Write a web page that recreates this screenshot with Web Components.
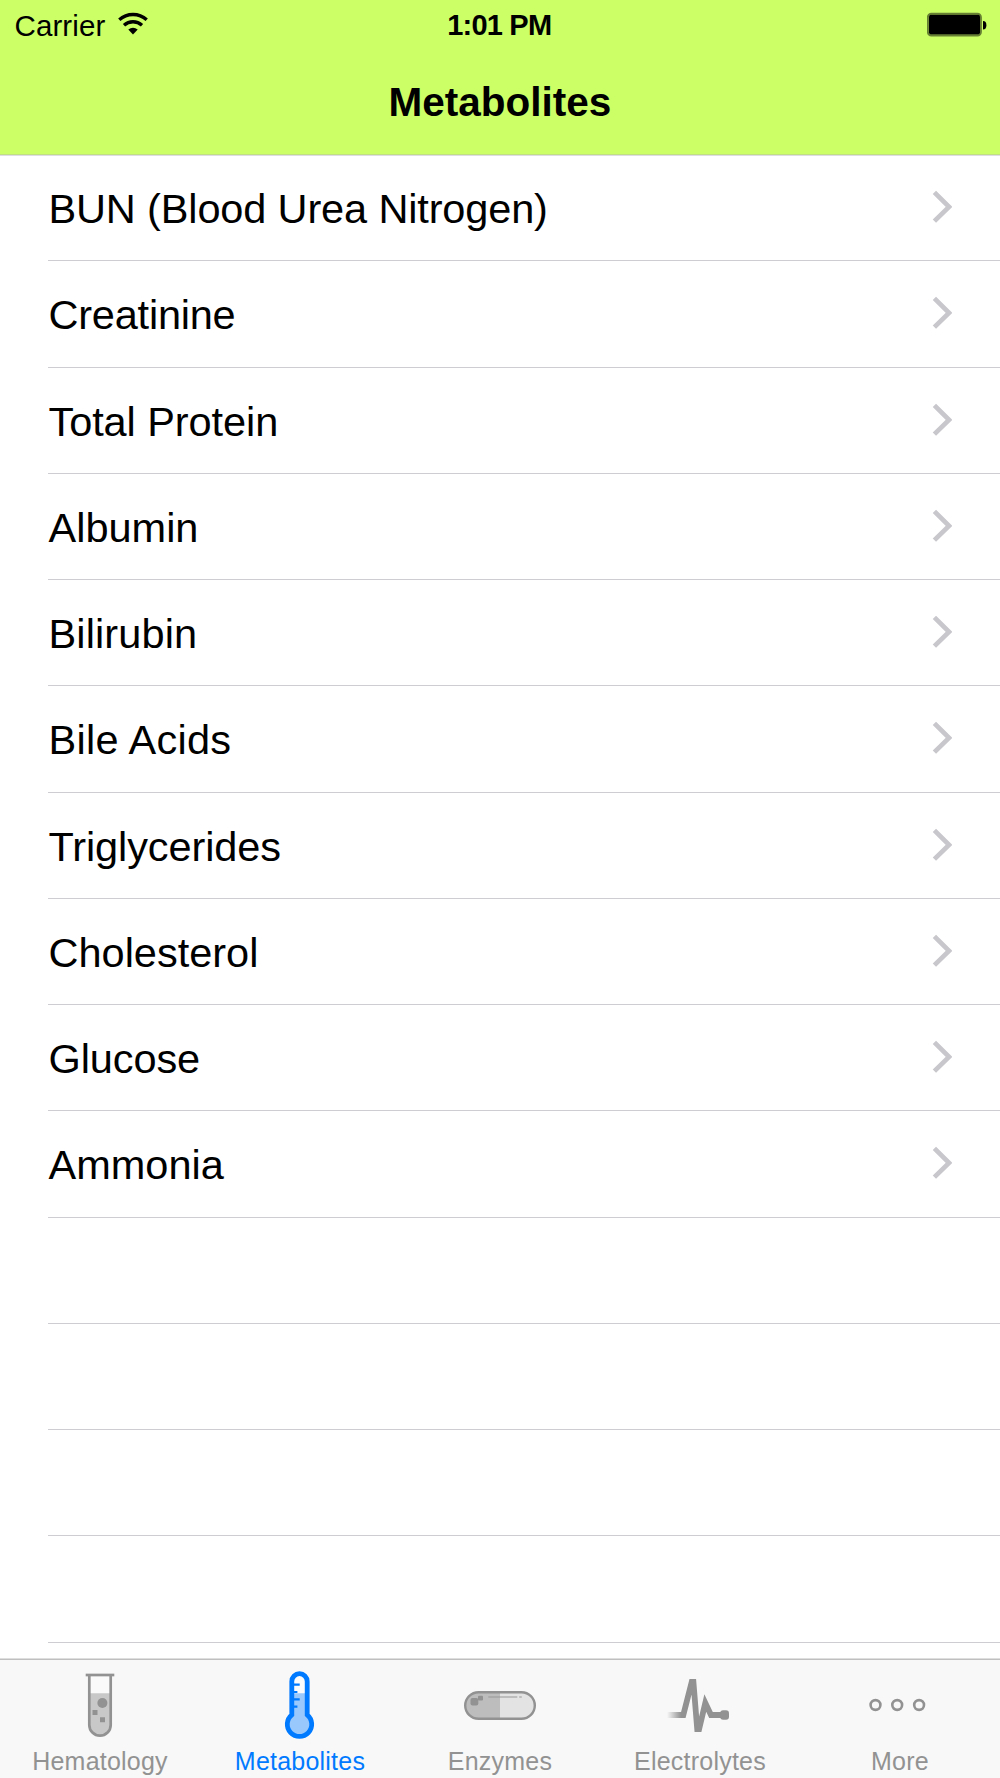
<!DOCTYPE html>
<html lang="en">
<head>
<meta charset="utf-8">
<title>Metabolites</title>
<style>
    body {
        margin: 0;
        background: #fff;
        color: #000;
        font-family: "Liberation Sans", Arial, sans-serif;
    }
</style>
</head>
<body>
<lab-app></lab-app>

<script>
(() => {

    const define = (name, html, setup) => {
        const template = document.createElement('template');
        template.innerHTML = html;

        window.customElements.define(name, class extends HTMLElement {
            constructor() {
                super();
                this.attachShadow({mode: 'open'});
                this.shadowRoot.appendChild(template.content.cloneNode(true));
            }

            connectedCallback() {
                if (setup) {
                    setup(this, this.shadowRoot);
                }
            }
        });
    };

    // viewBox: x is measured from the centre of the tab
    const icons = {
        tube: `
            <path d="M-10.7 6V56a10.7 10.7 0 0 0 21.4 0V6z" fill="#fafafa"/>
            <path d="M-10.7 24.3V56a10.7 10.7 0 0 0 21.4 0V24.3z" fill="#c8c8c8"/>
            <path d="M-10.7 6V56a10.7 10.7 0 0 0 21.4 0V6" fill="none" stroke="currentColor" stroke-width="2.7"/>
            <path d="M-14.3 6H14.3" stroke="currentColor" stroke-width="2.7"/>
            <circle cx="2.4" cy="34" r="5" fill="currentColor"/>
            <path d="M-7.5 41h5v5h-5zM0 48.3h5v5h-5z" fill="currentColor"/>`,
        thermometer: `
            <path d="M-8.2 44.8V12.3a7.7 7.7 0 0 1 15.4 0V44.8a12 12 0 1 1-15.4 0z" fill="#fcfcfc"/>
            <path d="M-8.2 44.8V24.3H7.2V44.8a12 12 0 1 1-15.4 0z" fill="#98c8fc"/>
            <path d="M-8.2 45.8V12.4a7.7 7.7 0 0 1 15.4 0V45.8a12.2 12.2 0 1 1-15.4 0z" fill="none" stroke="currentColor" stroke-width="4.8"/>
            <path d="M-7 15.7H-.3M-7 23H-2.6M-7 30.3H-.3M-7 37.7H-2.6" stroke="currentColor" stroke-width="2.2"/>`,
        capsule: `
            <path d="M0 23.3H-21.5a13.2 13.2 0 0 0 0 26.4H0z" fill="#bdbdbd"/>
            <path d="M0 23.3H21.5a13.2 13.2 0 0 1 0 26.4H0z" fill="#e3e3e3"/>
            <rect x="-34.8" y="23.2" width="69.6" height="26.6" rx="13.3" fill="none" stroke="currentColor" stroke-width="2.4"/>
            <rect x="-29.5" y="29" width="7.8" height="7.4" rx="2" fill="currentColor"/>
            <rect x="-22" y="26.8" width="5" height="4.8" rx="1" fill="currentColor"/>
            <path d="M-11.7 28H0" stroke="#aaa" stroke-width="2"/>
            <path d="M0 28H17.3M19.2 28h2.6" stroke="#bdbdbd" stroke-width="2.2"/>`,
        pulse: `
            <linearGradient id="fade" gradientUnits="userSpaceOnUse" x1="-33" y1="0" x2="-19" y2="0">
                <stop offset="0" stop-color="#929292" stop-opacity="0"/>
                <stop offset="1" stop-color="#929292"/>
            </linearGradient>
            <clipPath id="trim"><path d="M-34 10H29V63H-34z"/></clipPath>
            <path d="M-33 46H-16.7L-7 8L-2.3 66L5.3 34L11 46H25" fill="none" stroke="url(#fade)" stroke-width="5.8" clip-path="url(#trim)"/>
            <rect x="20.2" y="41.3" width="8.8" height="9.4" rx="3" fill="currentColor"/>`,
        more: `
            <g fill="none" stroke="currentColor" stroke-width="2.6">
                <circle cx="-24.5" cy="36" r="4.9"/>
                <circle cx="-2.8" cy="36" r="4.9"/>
                <circle cx="19.1" cy="36" r="4.9"/>
            </g>`
    };

    define('status-bar', `
        <style>
            :host {
                display: grid;
                grid-template-columns: 1fr auto 1fr;
                align-items: start;
                height: 48px;
                padding: 0 13px 0 14.5px;
                font-size: 29.5px;
                line-height: 51px;
            }
            .carrier {
                display: flex;
                gap: 13px;
                letter-spacing: .1px;
            }
            .wifi {
                margin-top: 12px;
            }
            .time {
                margin-right: 3px;
                font-size: 29px;
                font-weight: bold;
                letter-spacing: -.8px;
            }
            .battery {
                justify-self: end;
                margin-top: 12px;
            }
        </style>
        <div class="carrier">
            <span>Carrier</span>
            <svg class="wifi" width="30" height="24" viewBox="0 0 30 24">
                <g fill="none" stroke="#000" stroke-width="3.4">
                    <path d="M1.3 7.8a20.5 20.5 0 0 1 27.4 0"/>
                    <path d="M6 13.2a13.6 13.6 0 0 1 18 0"/>
                </g>
                <path d="M10.3 17.6a7.4 7.4 0 0 1 9.4 0L15 22.5z"/>
            </svg>
        </div>
        <span class="time">1:01 PM</span>
        <svg class="battery" width="60" height="26" viewBox="0 0 60 26">
            <rect x=".9" y="1.7" width="53" height="21.9" rx="3.5" fill="none" stroke="#000" stroke-opacity=".5" stroke-width="2"/>
            <rect x="2" y="2.8" width="51" height="19.7" rx="2"/>
            <path d="M56 9a3.4 4.2 0 0 1 0 8.4z"/>
        </svg>
    `);

    define('nav-bar', `
        <style>
            :host {
                display: block;
                position: relative;
                box-sizing: border-box;
                height: 155px;
                background: #cf6;
                border-bottom: 1px solid #bfdf82;
                box-shadow: 0 1px #dfdde4;
            }
            h1 {
                margin: 0;
                font-size: 40.5px;
                line-height: 109px;
                text-align: center;
            }
        </style>
        <status-bar></status-bar>
        <h1><slot></slot></h1>
    `);

    define('list-row', `
        <style>
            :host {
                display: flex;
                box-sizing: border-box;
                height: 106.25px;
                margin-left: 48px;
                padding: 0 48.5px 0 .5px;
                justify-content: space-between;
                border-bottom: 1px solid #cecdd1;
                font-size: 41.5px;
                line-height: 107px;
            }
            :host([empty]) svg {
                display: none;
            }
            svg {
                margin-top: 34px;
            }
        </style>
        <slot></slot>
        <svg width="20" height="36" viewBox="0 0 20 36">
            <path d="M2.4 3.4L17 17.8L2.4 32.2" fill="none" stroke="#c7c7cc" stroke-width="4.7"/>
        </svg>
    `);

    define('tab-item', `
        <style>
            :host {
                display: flex;
                flex: 1;
                flex-direction: column;
                align-items: center;
                color: #929292;
                font-size: 25px;
                line-height: 30px;
                letter-spacing: .22px;
            }
            :host([selected]) {
                color: #007aff;
            }
            svg {
                margin: 9px 0 5px;
            }
        </style>
        <svg width="80" height="72" viewBox="-40 0 80 72"></svg>
        <span><slot></slot></span>
    `, (host, root) => {
        root.querySelector('svg').innerHTML = icons[host.getAttribute('icon')];
    });

    define('tab-bar', `
        <style>
            :host {
                display: flex;
                position: relative;
                box-sizing: border-box;
                height: 119px;
                background: #f8f8f8;
                border-top: 1px solid #bfbfbf;
                box-shadow: 0 -1px #dedede;
            }
        </style>
        <slot></slot>
    `);

    define('lab-app', `
        <style>
            :host {
                display: flex;
                flex-direction: column;
                height: 1778px;
                overflow: hidden;
            }
            main {
                flex: 1;
                min-height: 0;
                overflow: hidden;
            }
        </style>
        <nav-bar>Metabolites</nav-bar>
        <main></main>
        <tab-bar>
            <tab-item icon="tube">Hematology</tab-item>
            <tab-item icon="thermometer" selected>Metabolites</tab-item>
            <tab-item icon="capsule">Enzymes</tab-item>
            <tab-item icon="pulse">Electrolytes</tab-item>
            <tab-item icon="more">More</tab-item>
        </tab-bar>
    `, (host, root) => {
        // name, tracking in px
        const tests = [
            ['BUN (Blood Urea Nitrogen)', -.14],
            ['Creatinine', -.22],
            ['Total Protein', -.08],
            ['Albumin', 0],
            ['Bilirubin', .12],
            ['Bile Acids', .3],
            ['Triglycerides', -.1],
            ['Cholesterol', 0],
            ['Glucose', -.1],
            ['Ammonia', 0],
            ['', 0],
            ['', 0],
            ['', 0],
            ['', 0]
        ];
        const main = root.querySelector('main');

        tests.forEach(([test, tracking]) => {
            const row = document.createElement('list-row');
            row.textContent = test;
            row.style.letterSpacing = tracking + 'px';
            row.toggleAttribute('empty', !test);
            main.appendChild(row);
        });
    });

})();
</script>
</body>
</html>
